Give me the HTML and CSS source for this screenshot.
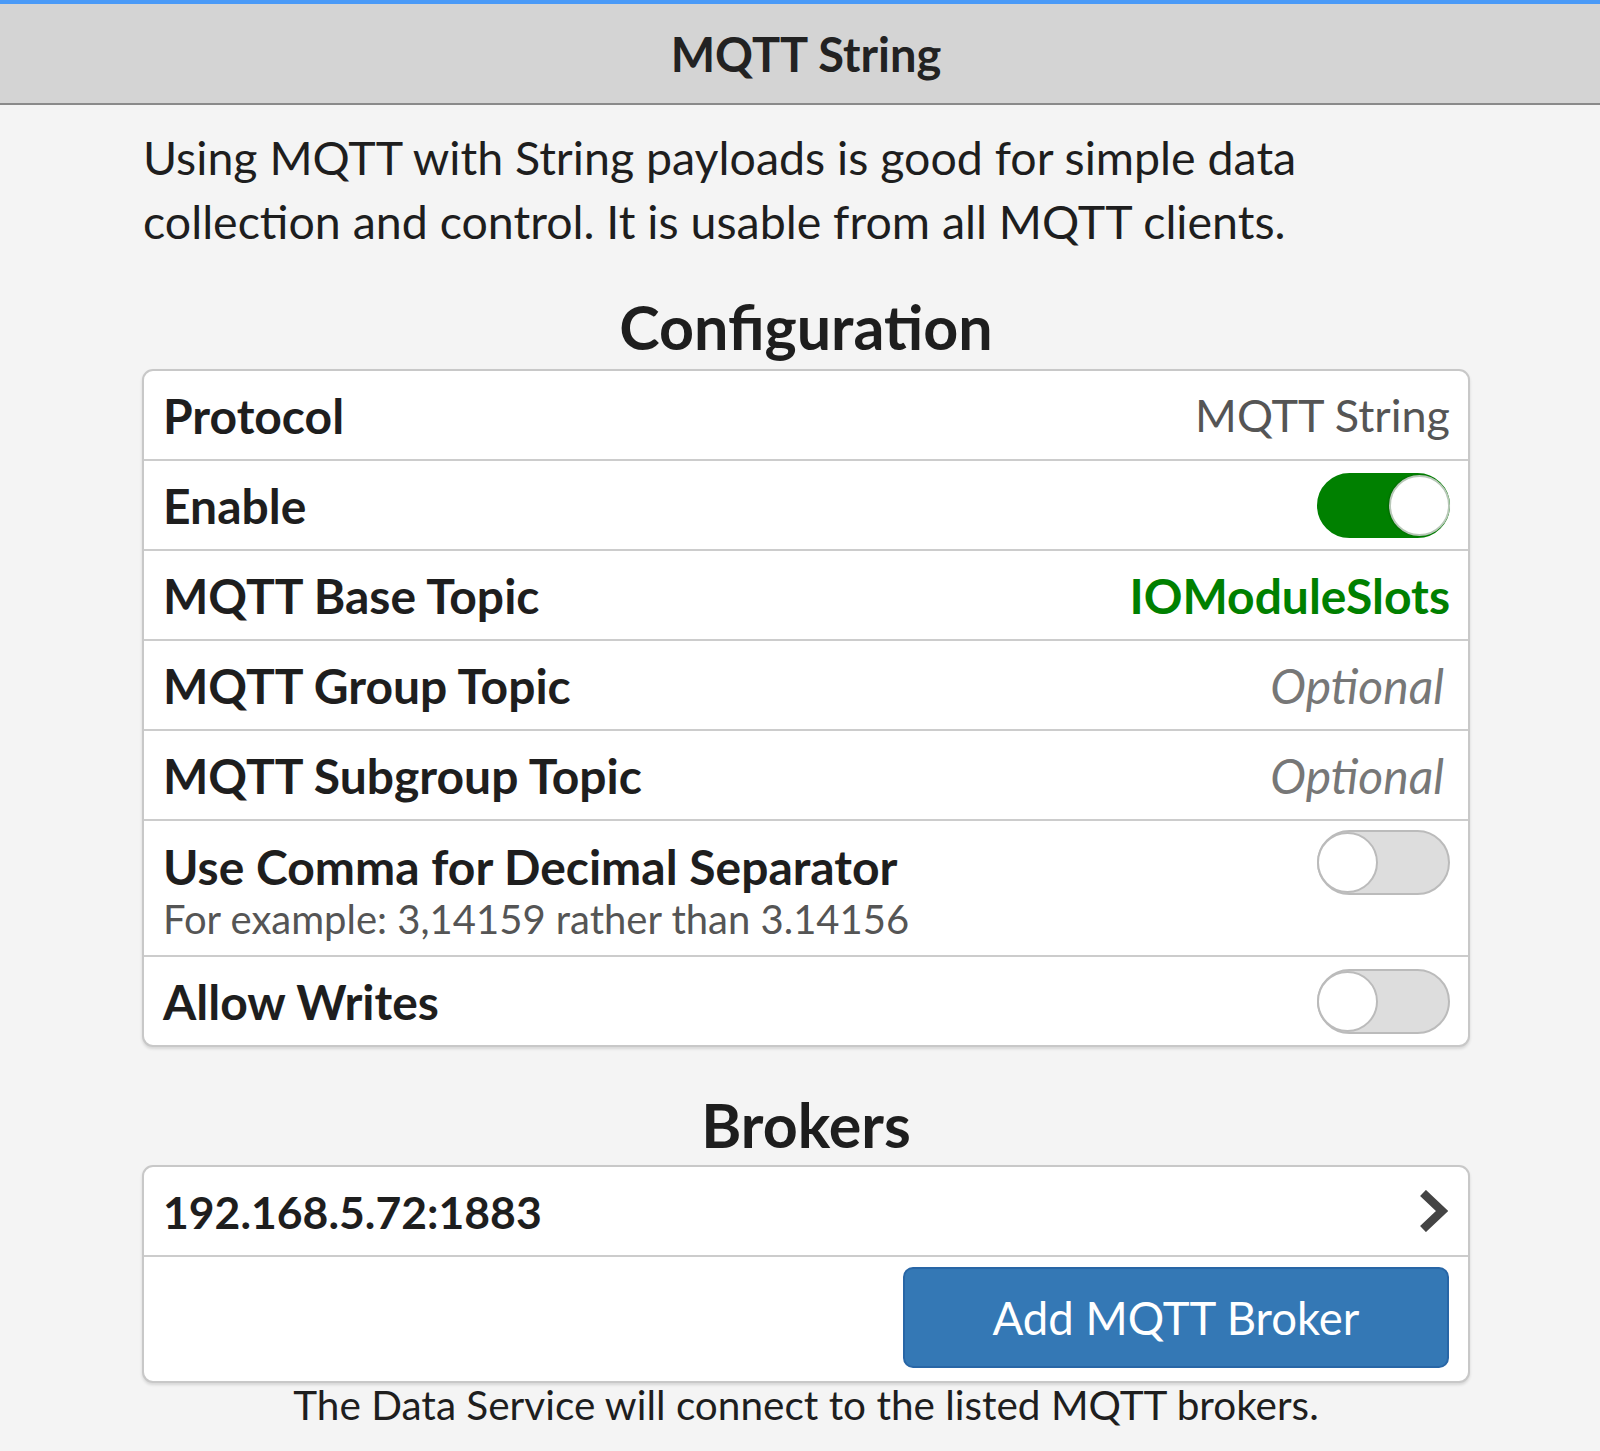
FILE: index.html
```html
<!DOCTYPE html>
<html lang="en">
<head>
<meta charset="utf-8">
<title>MQTT String</title>
<link rel="stylesheet" href="styles.css">
</head>
<body>
<div class="topline"></div>
<header class="titlebar"><div class="titlebar-inner">MQTT String</div></header>
<main class="page">
  <p class="intro">Using MQTT with String payloads is good for simple data collection and control. It is usable from all MQTT clients.</p>
  <h2 class="section-title first">Configuration</h2>
  <div class="card">
    <div class="row"><span class="label">Protocol</span><span class="value">MQTT String</span></div>
    <div class="row"><span class="label">Enable</span><span class="toggle on"><span class="knob"></span></span></div>
    <div class="row"><span class="label">MQTT Base Topic</span><span class="value strong">IOModuleSlots</span></div>
    <div class="row"><span class="label">MQTT Group Topic</span><span class="value placeholder">Optional</span></div>
    <div class="row"><span class="label">MQTT Subgroup Topic</span><span class="value placeholder">Optional</span></div>
    <div class="row tall">
      <div class="label-block"><div class="label">Use Comma for Decimal Separator</div><div class="sub">For example: 3,14159 rather than 3.14156</div></div>
      <span class="toggle"><span class="knob"></span></span>
    </div>
    <div class="row"><span class="label">Allow Writes</span><span class="toggle"><span class="knob"></span></span></div>
  </div>
  <h2 class="section-title second">Brokers</h2>
  <div class="card">
    <div class="row"><span class="label broker">192.168.5.72:1883</span>
      <svg class="chevron" width="30" height="42" viewBox="0 0 30 42"><polyline points="5,3 24,21 5,39" fill="none" stroke="#444" stroke-width="8.5"/></svg>
    </div>
    <div class="row button-row"><button class="btn">Add MQTT Broker</button></div>
  </div>
  <p class="footnote">The Data Service will connect to the listed MQTT brokers.</p>
</main>
</body>
</html>
```
FILE: styles.css
```css
html, body { margin: 0; padding: 0; }
body {
  background: #f4f4f4;
  font-family: "Lato", "Liberation Sans", sans-serif;
  color: #222;
  width: 1600px;
}
.topline { height: 4px; background: #4a9af7; }
.titlebar {
  height: 99px;
  background: #d4d4d4;
  border-bottom: 2px solid #8a8a8a;
}
.titlebar-inner {
  width: 1328px;
  margin-left: 142px;
  height: 99px;
  display: flex;
  align-items: center;
  justify-content: center;
  font-weight: 700;
  font-size: 47px;
  color: #222;
}
.page { width: 1328px; margin-left: 142px; }
.intro {
  margin: 20px 0 0;
  padding-left: 1px;
  font-size: 46.5px;
  line-height: 64px;
  color: #1e1e1e;
}
.section-title {
  margin: 0;
  text-align: center;
  font-size: 61px;
  line-height: 77px;
  font-weight: 700;
  color: #1e1e1e;
}
.section-title.first { margin-top: 35px; margin-bottom: 4px; }
.section-title.second { margin-top: 39px; margin-bottom: 2px; }
.card {
  background: #fff;
  border: 2px solid #c8c8c8;
  border-radius: 11px;
  box-shadow: 0 2px 3px rgba(0,0,0,0.12);
}
.row {
  height: 88px;
  display: flex;
  align-items: center;
  justify-content: space-between;
  padding: 0 18px 0 19px;
  box-sizing: content-box;
}
.row + .row { border-top: 2px solid #cccccc; }
.label { font-weight: 700; font-size: 48px; color: #1e1e1e; }
.label.broker { font-size: 44.5px; }
.value { font-size: 45px; color: #555; }
.value.strong { font-weight: 700; font-size: 48px; color: #008000; }
.value.placeholder { font-style: italic; font-size: 48px; color: #777; padding-right: 6px; }
.row.tall { height: auto; align-items: flex-start; padding-top: 9px; padding-bottom: 10px; }
.label-block { padding-top: 9px; }
.label-block .label { line-height: 55px; }
.sub { font-size: 40px; color: #555; line-height: 51px; }
.toggle {
  width: 129px;
  height: 61px;
  border-radius: 33px;
  border: 2px solid #bbbbbb;
  background: #dddddd;
  display: flex;
  justify-content: flex-start;
  align-items: center;
  flex: none;
}
.toggle .knob {
  width: 61px;
  height: 61px;
  border-radius: 50%;
  background: #fff;
  box-sizing: border-box;
  border: 2px solid #bbbbbb;
  margin-left: -2px;
}
.toggle.on {
  background: #008000;
  border-color: #008000;
  justify-content: flex-end;
}
.toggle.on .knob {
  border: 2px solid #b8c8b8;
  margin-left: 0;
  margin-right: -2px;
  box-shadow: -1px 0 2px rgba(0,0,0,0.2);
}
.chevron { margin-right: 2px; }
.button-row { height: 124px; justify-content: flex-end; }
.btn {
  width: 546px;
  height: 101px;
  background: #3478b5;
  border: 2px solid #2866a6;
  border-radius: 10px;
  color: #fff;
  font-family: inherit;
  font-size: 45.5px;
  margin-right: 1px;
  margin-top: -3px;
}
.footnote {
  margin: 0;
  text-align: center;
  font-size: 40.5px;
  line-height: 44px;
  color: #1e1e1e;
}
```
